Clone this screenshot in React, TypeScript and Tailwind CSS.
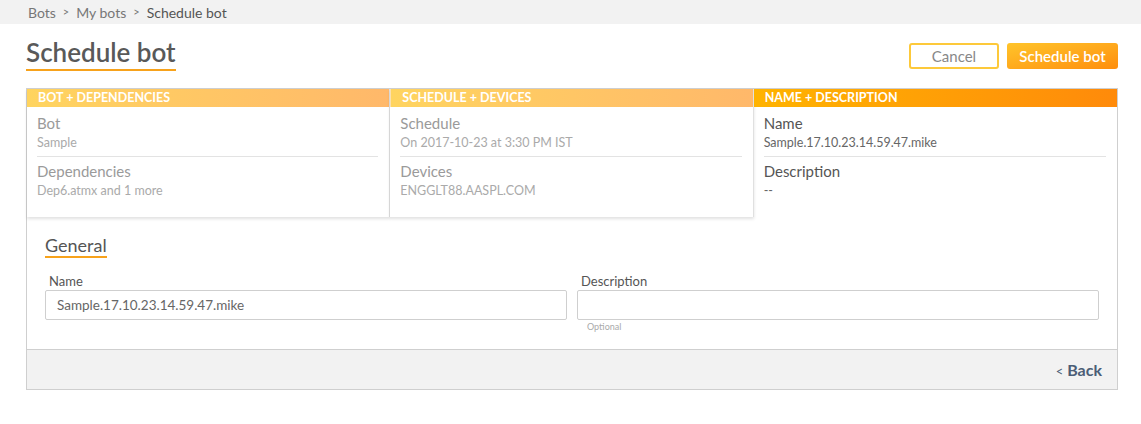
import React from "react";

const font = { fontFamily: "Lato, 'Open Sans', 'Liberation Sans', sans-serif" };

function Field({ label, value, active, divider }: { label: string; value: string; active?: boolean; divider?: boolean }) {
  return (
    <div className={divider ? "border-b border-[#e3e3e3] pb-[5px] mb-[4px]" : ""}>
      <div className={`text-[15px] leading-[20px] mb-[2px] ${active ? "text-[#555]" : "text-[#9a9a9a]"}`}>{label}</div>
      <div className={`text-[12.5px] leading-[16px] ${active ? "text-[#666]" : "text-[#aaa]"}`}>{value}</div>
    </div>
  );
}

function Tab({ title, items, active, grad }: { title: string; items: [string, string][]; active?: boolean; grad: string }) {
  return (
    <div className={active ? "flex flex-col" : "flex flex-col h-[128px] border-r border-[#e0e0e0] shadow-[0_2px_3px_rgba(0,0,0,0.12)] bg-white"}>
      <div className={`h-[18px] flex items-center pl-[11px] text-[12.5px] font-bold text-white uppercase leading-none ${grad}`}>
        {title}
      </div>
      <div className="px-[10px] pt-[6px] pr-[11px]">
        <Field label={items[0][0]} value={items[0][1]} active={active} divider />
        <Field label={items[1][0]} value={items[1][1]} active={active} />
      </div>
    </div>
  );
}

export default function App() {
  return (
    <div className="w-[1141px] h-[424px] bg-white" style={font}>
      <div className="h-[24px] bg-[#f2f2f2] pl-[28px] flex items-center text-[14px] text-[#777] gap-[7px]">
        <span>Bots</span>
        <span className="text-[11px]">&gt;</span>
        <span>My bots</span>
        <span className="text-[11px]">&gt;</span>
        <span className="text-[#555]">Schedule bot</span>
      </div>
      <div className="flex items-start justify-between pl-[26px] pr-[23px] pt-[12px]">
        <div className="text-[26px] leading-[32px] font-semibold text-[#595959] border-b-2 border-[#f7a21b] pb-[1px]">
          Schedule bot
        </div>
        <div className="flex gap-[8px] mt-[7px]">
          <button className="w-[90px] h-[26px] border-2 border-[#fdc93a] rounded-[3px] text-[15px] text-[#888] bg-white">
            Cancel
          </button>
          <button className="w-[111px] h-[26px] rounded-[3px] text-[15px] font-semibold text-white bg-gradient-to-br from-[#ffc42a] to-[#ff8e0c]">
            Schedule bot
          </button>
        </div>
      </div>
      <div className="ml-[26px] mr-[23px] mt-[17px] border border-[#cfcfcf]">
        <div className="grid grid-cols-3">
          <Tab
            title="Bot + Dependencies"
            grad="bg-gradient-to-r from-[#ffd45f] to-[#ffb86a]"
            items={[["Bot", "Sample"], ["Dependencies", "Dep6.atmx and 1 more"]]}
          />
          <Tab
            title="Schedule + Devices"
            grad="bg-gradient-to-r from-[#ffd45f] to-[#ffb86a] border-l border-[#fbe0b0]"
            items={[["Schedule", "On 2017-10-23 at 3:30 PM IST"], ["Devices", "ENGGLT88.AASPL.COM"]]}
          />
          <Tab
            title="Name + Description"
            active
            grad="bg-gradient-to-r from-[#ffb300] to-[#ff8a0a]"
            items={[["Name", "Sample.17.10.23.14.59.47.mike"], ["Description", "--"]]}
          />
        </div>
        <div className="px-[18px] pt-[17px] pb-[16px]">
          <div className="inline-block text-[18px] leading-[22px] text-[#555] border-b-2 border-[#f7a21b] pb-[0px]">
            General
          </div>
          <div className="grid grid-cols-2 gap-[10px] mt-[15px]">
            <div>
              <div className="text-[13px] leading-[16px] text-[#555] pl-[4px]">Name</div>
              <div className="mt-[1px] h-[30px] border border-[#cfcfcf] rounded-[2px] flex items-center pl-[11px] text-[13.5px] text-[#666]">
                Sample.17.10.23.14.59.47.mike
              </div>
            </div>
            <div>
              <div className="text-[13px] leading-[16px] text-[#555] pl-[4px]">Description</div>
              <div className="mt-[1px] h-[30px] border border-[#cfcfcf] rounded-[2px]"></div>
              <div className="text-[9px] leading-[12px] text-[#aaa] pl-[10px] mt-[1px]">Optional</div>
            </div>
          </div>
        </div>
        <div className="h-[40px] bg-[#f2f2f2] border-t border-[#cfcfcf] flex items-center justify-end pr-[15px]">
          <span className="text-[16px] font-bold text-[#4b5d76]">
            <span className="font-normal text-[13px] mr-[4px]">&lt;</span>Back
          </span>
        </div>
      </div>
    </div>
  );
}
